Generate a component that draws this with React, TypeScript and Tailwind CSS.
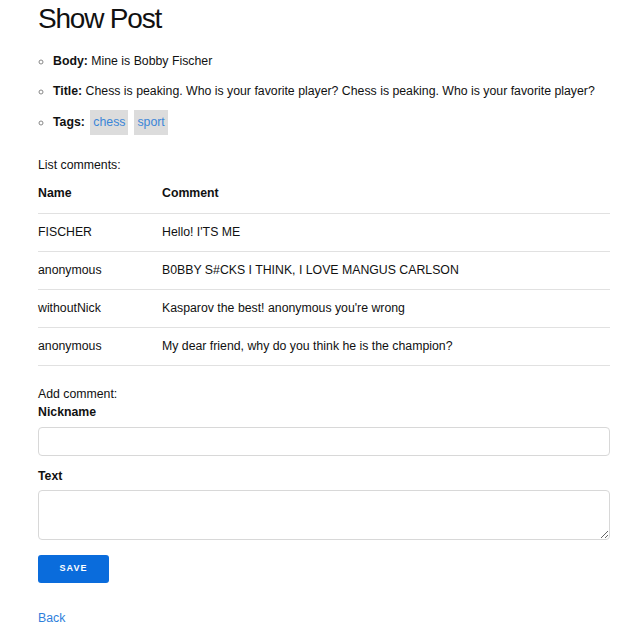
const comments = [
  { name: "FISCHER", text: "Hello! I'TS ME" },
  { name: "anonymous", text: "B0BBY S#CKS I THINK, I LOVE MANGUS CARLSON" },
  { name: "withoutNick", text: "Kasparov the best! anonymous you're wrong" },
  { name: "anonymous", text: "My dear friend, why do you think he is the champion?" },
];

export default function App() {
  return (
    <div className="px-[38px] pr-[30px] text-[12.3px] text-[#111] font-['Liberation_Sans',Arial,sans-serif]">
      <h1 className="pt-[2px] text-[28px] leading-[34px] tracking-[-1.2px]">Show Post</h1>

      <ul className="mt-[10px] list-[circle] pl-[15px] marker:text-[#888]">
        <li className="leading-[30px]">
          <b>Body:</b> Mine is Bobby Fischer
        </li>
        <li className="leading-[30px]">
          <b>Title:</b> Chess is peaking. Who is your favorite player? Chess is peaking. Who is your favorite player?
        </li>
        <li className="leading-[32px]">
          <b>Tags:</b>{" "}
          <span className="ml-[2px] inline-flex gap-[6px] align-middle">
            <a className="bg-[#dcdcdc] px-[3px] leading-[25px] text-[#3b86d8]">chess</a>
            <a className="bg-[#dcdcdc] px-[3px] leading-[25px] text-[#3b86d8]">sport</a>
          </span>
        </li>
      </ul>

      <p className="mt-[19px] leading-[16px]">List comments:</p>

      <table className="mt-[1px] w-full border-collapse text-left">
        <thead>
          <tr className="h-[39px] border-b border-[#e1e1e1]">
            <th className="w-[124px] font-bold">Name</th>
            <th className="font-bold">Comment</th>
          </tr>
        </thead>
        <tbody>
          {comments.map((c, i) => (
            <tr key={i} className="h-[38px] border-b border-[#e1e1e1]">
              <td>{c.name}</td>
              <td>{c.text}</td>
            </tr>
          ))}
        </tbody>
      </table>

      <p className="mt-[20px] leading-[16px]">Add comment:</p>
      <label className="block mt-[2px] font-bold leading-[16px]">Nickname</label>
      <input className="mt-[7px] block h-[29px] w-full rounded-[4px] border border-[#d8d8d8] px-2 outline-none" />
      <label className="block mt-[12px] font-bold leading-[16px]">Text</label>
      <textarea className="mt-[6px] block h-[50px] w-full rounded-[4px] border border-[#d8d8d8] px-2 outline-none" />

      <button className="mt-[15px] h-[28px] w-[71px] rounded-[3px] bg-[#0a6cdc] text-[9px] font-bold tracking-[1px] text-white">
        SAVE
      </button>

      <div className="mt-[26px]">
        <a className="text-[#2f7fdc]">Back</a>
      </div>
    </div>
  );
}
